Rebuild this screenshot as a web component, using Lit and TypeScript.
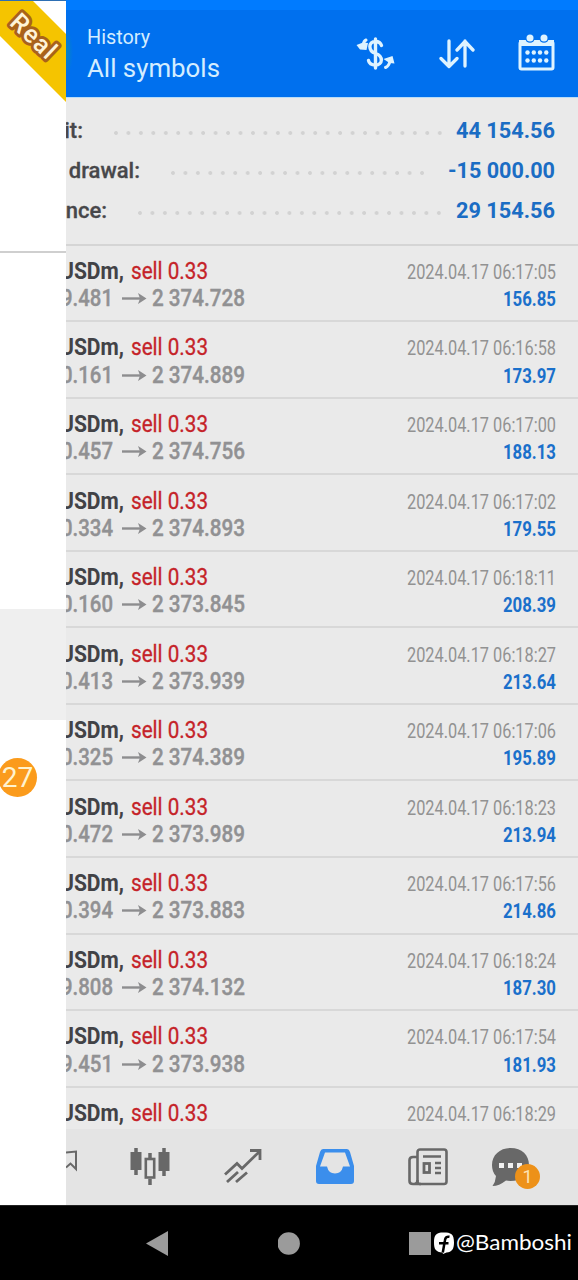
import { LitElement, html, css, svg } from 'lit';
import { customElement, property } from 'lit/decorators.js';

interface Deal {
  open: string;
  close: string;
  time: string;
  profit: string;
}

const DEALS: Deal[] = [
  { open: '9.481', close: '2 374.728', time: '2024.04.17 06:17:05', profit: '156.85' },
  { open: '0.161', close: '2 374.889', time: '2024.04.17 06:16:58', profit: '173.97' },
  { open: '0.457', close: '2 374.756', time: '2024.04.17 06:17:00', profit: '188.13' },
  { open: '0.334', close: '2 374.893', time: '2024.04.17 06:17:02', profit: '179.55' },
  { open: '0.160', close: '2 373.845', time: '2024.04.17 06:18:11', profit: '208.39' },
  { open: '0.413', close: '2 373.939', time: '2024.04.17 06:18:27', profit: '213.64' },
  { open: '0.325', close: '2 374.389', time: '2024.04.17 06:17:06', profit: '195.89' },
  { open: '0.472', close: '2 373.989', time: '2024.04.17 06:18:23', profit: '213.94' },
  { open: '0.394', close: '2 373.883', time: '2024.04.17 06:17:56', profit: '214.86' },
  { open: '9.808', close: '2 374.132', time: '2024.04.17 06:18:24', profit: '187.30' },
  { open: '9.451', close: '2 373.938', time: '2024.04.17 06:17:54', profit: '181.93' },
  { open: '', close: '', time: '2024.04.17 06:18:29', profit: '' },
];

const SUMMARY = [
  { label: 'it:', labelEnd: 17, dots: 27, dotsStart: 48, value: '44 154.56', width: 99 },
  { label: 'drawal:', labelEnd: 74, dots: 21, dotsStart: 105, value: '-15 000.00', width: 107 },
  { label: 'nce:', labelEnd: 41, dots: 25, dotsStart: 72, value: '29 154.56', width: 99 },
];

// Condensed text: glyphs are squeezed to the given width
const fit = (text: string, width: number, cls: string) => html`
  <svg class="fit ${cls}" width=${width} height="27">
    <text y="21" textLength=${width} lengthAdjust="spacingAndGlyphs">${text}</text>
  </svg>
`;

@customElement('deal-row')
class DealRow extends LitElement {
  @property({ attribute: false }) deal!: Deal;

  static styles = css`
    :host {
      display: flex;
      justify-content: space-between;
      flex: none;
      box-sizing: border-box;
      height: 76.55px;
      padding: 12.3px 22px 0 0;
      border-bottom: 2px solid #d8d8d8;
      overflow: hidden;
    }

    .line {
      display: flex;
      height: 27.2px;
    }

    .left {
      margin-left: -6px;
    }

    .right .line {
      justify-content: flex-end;
    }

    .fit {
      display: block;
      flex: none;
      overflow: visible;
      font-family: Roboto, sans-serif;
    }

    .symbol { font-size: 24px; font-weight: 700; fill: #424246; }
    .side { font-size: 24px; fill: #c52329; stroke: #c52329; stroke-width: 0.3px; margin-left: 7px; }
    .price { font-size: 24px; font-weight: 500; fill: #919193; stroke: #919193; stroke-width: 0.4px; }
    .open { margin-left: 1px; }
    .arrow { flex: none; margin: 0 5px 0 9px; fill: none; stroke: #8d8d8f; stroke-width: 2.4; }
    .head { fill: #8d8d8f; stroke: none; }
    .time { font-size: 21px; fill: #929292; }
    .profit { font-size: 20px; font-weight: 700; fill: #1a70cb; }
  `;

  render() {
    const { open, close, time, profit } = this.deal;
    return html`
      <div class="left">
        <div class="line">
          ${fit('USDm,', 64, 'symbol')}
          ${fit('sell 0.33', 77, 'side')}
        </div>
        ${open ? html`
          <div class="line">
            ${fit(open, 52, 'price open')}
            <svg class="arrow" width="25" height="27">
              <path d="M0 13.500H20" />
              <path class="head" d="M16 8L24.500 13.500L16 19L18 13.500Z" />
            </svg>
            ${fit(close, 93, 'price')}
          </div>
        ` : ''}
      </div>
      <div class="right">
        <div class="line">${fit(time, 149, 'time')}</div>
        ${profit ? html`<div class="line">${fit(profit, 53, 'profit')}</div>` : ''}
      </div>
    `;
  }
}

@customElement('app-root')
class AppRoot extends LitElement {
  static styles = css`
    :host {
      display: grid;
      grid-template-columns: 66px 512px;
      grid-template-rows: 1205px 75px;
      width: 578px;
      height: 1280px;
      overflow: hidden;
      background: #000;
      font-family: Roboto, sans-serif;
    }

    .fit {
      display: block;
      flex: none;
      overflow: visible;
    }

    /* drawer sliding in from the left */
    .drawer {
      display: flex;
      flex-direction: column;
      box-sizing: border-box;
      border-top: 1px solid #2d6fb4;
      background: #fff;
      overflow: hidden;
    }

    .ribbon {
      display: block;
      flex: none;
    }

    .ribbon text {
      font: 500 25px Roboto, sans-serif;
      fill: #fff4d8;
      stroke: #a9621b;
      stroke-width: 6px;
      stroke-linejoin: round;
      paint-order: stroke;
    }

    .rule {
      flex: none;
      height: 2px;
      margin-top: 148px;
      background: #cfcfcf;
    }

    .selected {
      flex: none;
      height: 111px;
      margin-top: 356px;
      background: #efefef;
    }

    .count {
      display: flex;
      flex: none;
      align-items: center;
      justify-content: center;
      width: 39px;
      height: 39px;
      margin: 38px 0 0 -2px;
      border-radius: 50%;
      background: #fb9b1c;
      color: #fff3cf;
      font-size: 28px;
    }

    .main {
      display: flex;
      flex-direction: column;
      min-width: 0;
      background: #eaeaea;
      overflow: hidden;
    }

    .header {
      display: flex;
      flex: none;
      box-sizing: border-box;
      height: 98px;
      padding: 0 22px 0 21px;
      border-top: 10px solid #007bff;
      border-bottom: 1px solid #b8dcf8;
      background: radial-gradient(ellipse 7px 24px at 0 42px, #0587c0 0, #0070ee 100%);
    }

    .titles {
      flex: 1;
      padding-top: 12.5px;
      fill: #d4edff;
    }

    .small { font-size: 20px; }
    .large { font-size: 26.5px; margin-top: 6px; }

    .tools {
      display: flex;
      align-items: flex-start;
      padding-top: 22px;
    }

    .tools svg + svg {
      margin-left: 41px;
    }

    .tool {
      display: block;
      fill: none;
      stroke: #def3ff;
      stroke-width: 3;
      stroke-linecap: round;
      stroke-linejoin: round;
    }

    .solid {
      fill: #def3ff;
      stroke: none;
    }

    .summary {
      flex: none;
      box-sizing: border-box;
      height: 147.6px;
      padding: 19px 22px 0 0;
      border-bottom: 2px solid #d5d5d5;
    }

    .total {
      display: flex;
      justify-content: space-between;
      height: 40px;
    }

    .left {
      display: flex;
      align-items: flex-start;
    }

    .label {
      display: flex;
      justify-content: flex-end;
      font-size: 22px;
      font-weight: 500;
      line-height: 27px;
      color: #47474a;
      -webkit-text-stroke: 0.3px #47474a;
      white-space: nowrap;
    }

    .dots {
      height: 4px;
      margin-top: 14px;
      background: radial-gradient(circle at 2px 2px, #d2d2d2 1.5px, transparent 2.3px) 0 0 / 12.46px 4px repeat-x;
    }

    .value {
      font-size: 22px;
      font-weight: 700;
      fill: #1b6dc4;
      margin-right: 1px;
    }

    .list {
      display: flex;
      flex: 1;
      flex-direction: column;
      min-height: 0;
      overflow: hidden;
    }

    .tabs {
      display: flex;
      flex: none;
      height: 76px;
      background: #e4e4e4;
    }

    .tab {
      display: flex;
      flex: none;
      justify-content: center;
      position: relative;
      width: 92.5px;
      padding-top: 17px;
    }

    .tab.cut {
      justify-content: flex-start;
      width: 38px;
    }

    .icon {
      display: block;
      fill: none;
      stroke: #686868;
      stroke-width: 2.6;
    }

    .icon .full { fill: #686868; }
    .icon .blue { fill: #3b8eec; stroke: none; }

    .badge {
      display: flex;
      align-items: center;
      justify-content: center;
      position: absolute;
      left: 41px;
      top: 35px;
      width: 25px;
      height: 25px;
      border-radius: 50%;
      background: #ed9119;
      color: #fde3b4;
      font-size: 18px;
    }

    .system {
      display: flex;
      grid-column: 1 / 3;
      align-items: flex-start;
      padding: 25px 0 0 145px;
      background: #000;
      border-top: 1px solid #222;
      box-sizing: border-box;
    }

    .system svg {
      flex: none;
    }

    .key { fill: #9b9b9b; }
    .home { margin-left: 109px; }
    .recent { margin-left: 108px; }
    .logo { margin: 1px 0 0 1.5px; }

    .handle {
      margin-left: 1px;
      margin-top: -2px;
      font-family: Lato, sans-serif;
      font-size: 21.5px;
      fill: #fff;
    }
  `;

  renderDrawer() {
    return html`
      <div class="drawer">
        <svg class="ribbon" width="66" height="102">
          <path d="M0 0H33L66 33V101L0 35Z" fill="#f5c400" />
          <text transform="translate(8.500 23) rotate(43.500)" textLength="53">Real</text>
        </svg>
        <div class="rule"></div>
        <div class="selected"></div>
        <div class="count">27</div>
      </div>
    `;
  }

  renderHeader() {
    return html`
      <div class="header">
        <div class="titles">
          ${fit('History', 63, 'small')}
          ${fit('All symbols', 133, 'large')}
        </div>
        <div class="tools">
          <svg class="tool" width="40" height="42">
            <path d="M25.500 13.500C24.500 10.500 22.500 9.500 19.500 9.500C12 9.500 12 19 19.500 21.500C27.500 24 27 33 19.500 33C15 33 13 31 12.500 28.500M19.500 7V36" stroke-width="3.400" />
            <path d="M10 8Q7.500 9 7.500 13M29.500 35.500Q33 34 34 29" />
            <path class="solid" d="M0.500 13L7 10.500L12 11L10.500 18L4 17.500ZM27.500 27L36.500 24L38.500 31.500L33.500 31Z" />
          </svg>
          <svg class="tool" width="38" height="42">
            <path d="M12 9V34M4 26.500L12 34.500L20 26.500M28 34V9M20 18L28 9.500L36 18" stroke-width="3.300" />
          </svg>
          <svg class="tool" width="40" height="42">
            <rect x="4" y="10" width="33" height="27" rx="1.500" />
            <path class="solid" d="M3 8h35v6h-35z" />
            <circle cx="14" cy="6" r="4.800" fill="#0070ee" stroke="none" />
            <circle cx="28" cy="6" r="4.800" fill="#0070ee" stroke="none" />
            <circle class="solid" cx="14" cy="6" r="3.500" />
            <circle class="solid" cx="28" cy="6" r="3.500" />
            ${[20.5, 28.5].map(y => [11.5, 17.8, 24, 30.3].map(x => svg`
              <circle class="solid" cx=${x} cy=${y} r="2.200" />
            `))}
          </svg>
        </div>
      </div>
    `;
  }

  renderSummary() {
    return html`
      <div class="summary">
        ${SUMMARY.map(s => html`
          <div class="total">
            <div class="left">
              <div class="label" style="width:${s.labelEnd}px">${s.label}</div>
              <div class="dots" style="width:${s.dots * 12.46 - 7}px;margin-left:${s.dotsStart - s.labelEnd}px"></div>
            </div>
            ${fit(s.value, s.width, 'value')}
          </div>
        `)}
      </div>
    `;
  }

  renderTabs() {
    return html`
      <div class="tabs">
        <div class="tab cut">
          <svg class="icon" width="14" height="40">
            <path d="M0 6.500L10 5.500V23L4.500 17.500L0 21.500" stroke-width="2" />
          </svg>
        </div>
        <div class="tab">
          <svg class="icon" width="42" height="42">
            <path d="M7 2V29M35 2V30M21 7V13M21 33V39" stroke-width="3.500" />
            <path class="full" d="M2.500 7h9v16h-9zM30.500 7h9v17h-9z" stroke-width="2" />
            <rect x="16.800" y="13" width="8.400" height="18.500" />
          </svg>
        </div>
        <div class="tab">
          <svg class="icon" width="42" height="42">
            <path d="M3 28.500L15 17.500L20 22.500L38 5M28 4.500H38V14M5 36L16 26M14 36L25 26.500" stroke-width="2.800" />
          </svg>
        </div>
        <div class="tab">
          <svg class="icon" width="42" height="42">
            <path class="blue" fill-rule="evenodd" d="M9 3H33Q35 3 36 6L40 20V35Q40 38 37 38H5Q2 38 2 35V20L6 6Q7 3 9 3ZM11 6.500L6 20.500H13Q14.500 27.500 21 27.500Q27.500 27.500 29 20.500H36L31 6.500Z" />
          </svg>
        </div>
        <div class="tab">
          <svg class="icon" width="42" height="42">
            <rect x="10.500" y="3.500" width="29" height="34.500" rx="2.500" />
            <path d="M10 11H6Q2.500 11 2.500 14V35Q2.500 38 6 38H14M10.500 34Q10.500 38 7 38M16 10.500H34M28 17H34M28 22H34M28 27H34" />
            <rect x="17" y="17.500" width="5.500" height="9" stroke-width="2.800" />
          </svg>
        </div>
        <div class="tab">
          <svg class="icon" width="64" height="42">
            <path class="full" stroke="none" d="M22.500 2C34 2 41 9 41 19C41 29 33 35 22.500 35L18 34.500Q11 40 4.500 40Q7.500 36 8 30Q4 26 4 19C4 9 12 2 22.500 2Z" />
            <path d="M11 17h5v5h-5zM20 17h5v5h-5zM29 17h5v5h-5z" fill="#f1f1f1" stroke="none" />
          </svg>
          <div class="badge">1</div>
        </div>
      </div>
    `;
  }

  renderSystemBar() {
    return html`
      <div class="system">
        <svg class="key" width="24" height="25"><path d="M1 12.500L23 0V25Z" /></svg>
        <svg class="key home" width="23" height="25"><circle cx="10.700" cy="12.500" r="11.200" /></svg>
        <svg class="key recent" width="23" height="25"><path d="M-1 1H22V24H-1Z" /></svg>
        <svg class="logo" width="21" height="22">
          <path fill="#fff" d="M9.500 0.500C17 0.500 20 2 20 10.500C20 17 18 20 12.500 20.500L9 22L8.500 20.500C1.500 20 0 17 0 10.500C0 3 2 0.500 9.500 0.500Z" />
          <path fill="none" stroke="#000" stroke-width="2.500" d="M15.500 4.800Q11.500 4 10.900 8.500L8.800 20.500M5 11.200H14.500" />
        </svg>
        ${fit('@Bamboshi', 116, 'handle')}
      </div>
    `;
  }

  render() {
    return html`
      ${this.renderDrawer()}
      <div class="main">
        ${this.renderHeader()}
        ${this.renderSummary()}
        <div class="list">
          ${DEALS.map(deal => html`<deal-row .deal=${deal}></deal-row>`)}
        </div>
        ${this.renderTabs()}
      </div>
      ${this.renderSystemBar()}
    `;
  }
}
